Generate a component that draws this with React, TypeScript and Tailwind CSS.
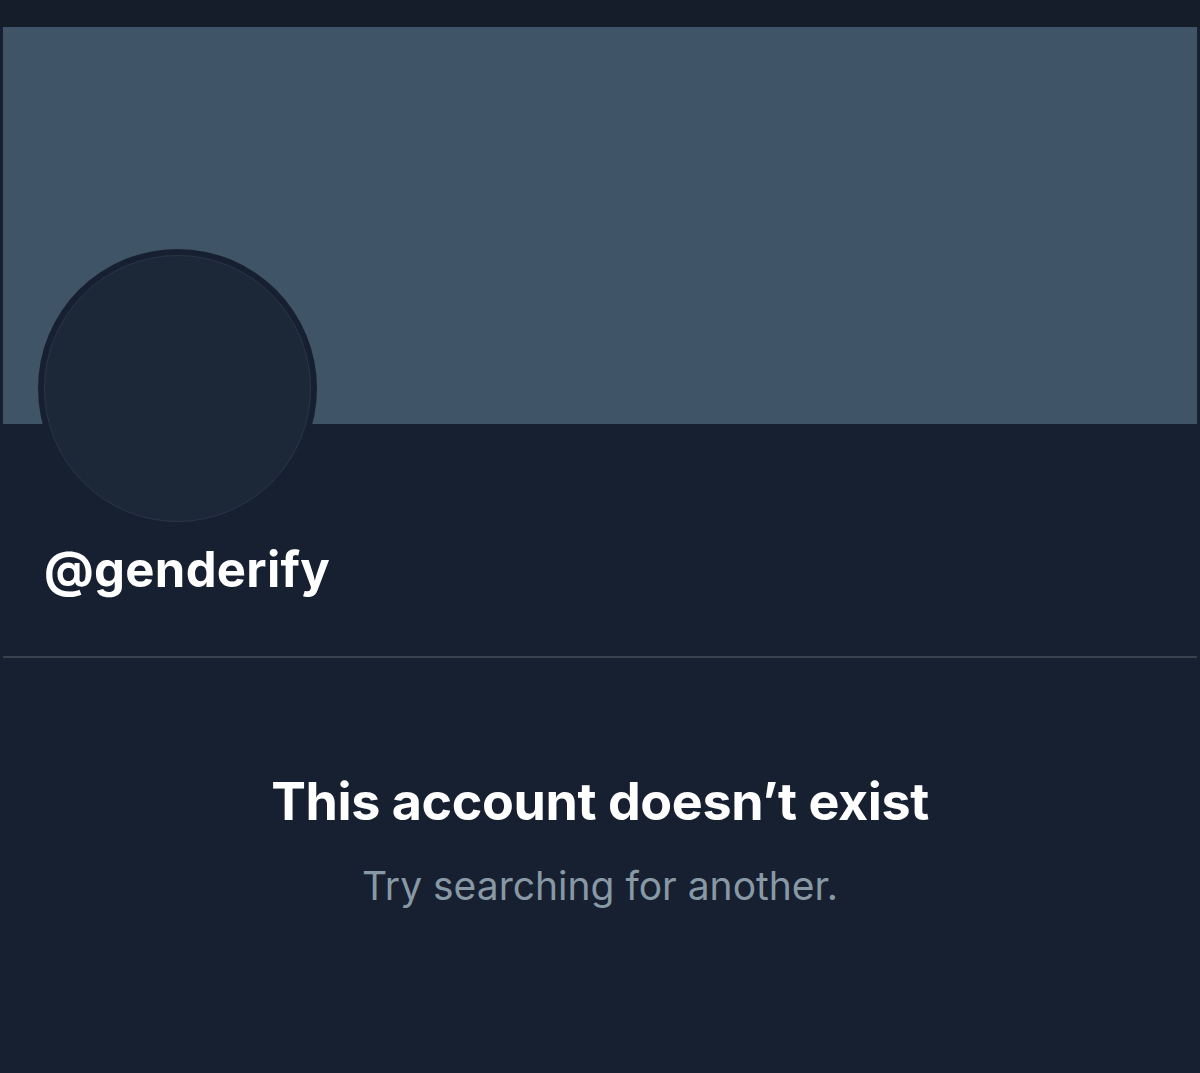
export default function App() {
  return (
    <div
      className="w-[1200px] h-[1073px] bg-[#172030] overflow-hidden"
      style={{ fontFamily: "Inter, 'Noto Sans', sans-serif" }}
    >
      {/* top strip */}
      <div className="h-[27px] bg-[#151d2a]" />

      {/* banner */}
      <div className="px-[3px]">
        <div className="h-[397px] bg-[#3f5467]" />
      </div>

      {/* avatar */}
      <div className="ml-[38px] -mt-[175px] w-[279px] h-[279px] rounded-full bg-[#162030] p-[6px]">
        <div className="w-full h-full rounded-full bg-[#1c2838] border border-[#2a3647]" />
      </div>

      {/* handle */}
      <div className="mt-[14px] pl-[44px] text-[49px] leading-[56px] font-bold text-white tracking-[0.3px]">
        @genderify
      </div>

      {/* divider */}
      <div className="mt-[58px] mx-[3px] h-[2px] bg-[#37424f]" />

      {/* empty state */}
      <div className="flex flex-col items-center">
        <h1 className="mt-[112px] text-[52px] leading-[64px] font-bold text-white tracking-[-0.4px]">
          This account doesn’t exist
        </h1>
        <p className="mt-[28px] text-[39px] leading-[48px] text-[#8899a6]">
          Try searching for another.
        </p>
      </div>
    </div>
  );
}
